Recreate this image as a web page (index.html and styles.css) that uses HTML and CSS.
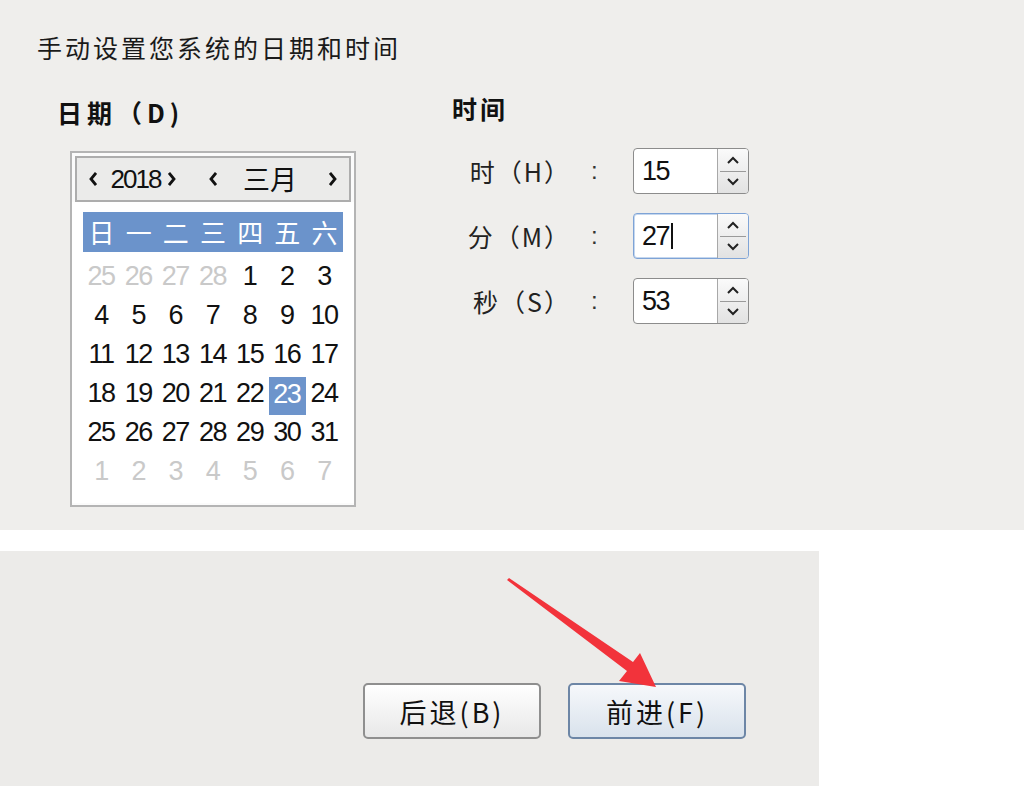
FILE: index.html
```html
<!DOCTYPE html>
<html lang="zh-CN">
<head>
<meta charset="utf-8">
<title>日期和时间</title>
<link rel="stylesheet" href="styles.css">
</head>
<body>
<div class="top">
  <div class="title">手动设置您系统的日期和时间</div>
  <div class="cols">
    <div class="date-col">
      <div class="heading">日期（D)</div>
      <div class="cal">
        <div class="cal-head">
          <svg class="chev c1" viewBox="0 0 8 16"><path d="M7 2 L2 8 L7 14" /></svg>
          <span class="year">2018</span>
          <svg class="chev c2" viewBox="0 0 8 16"><path d="M1 2 L6 8 L1 14" /></svg>
          <svg class="chev c3" viewBox="0 0 8 16"><path d="M7 2 L2 8 L7 14" /></svg>
          <span class="month">三月</span>
          <svg class="chev c4" viewBox="0 0 8 16"><path d="M1 2 L6 8 L1 14" /></svg>
        </div>
        <div class="cal-body">
          <div class="wk">
            <span>日</span><span>一</span><span>二</span><span>三</span><span>四</span><span>五</span><span>六</span>
          </div>
          <div class="days">
            <span class="off">25</span><span class="off">26</span><span class="off">27</span><span class="off">28</span><span>1</span><span>2</span><span>3</span>
            <span>4</span><span>5</span><span>6</span><span>7</span><span>8</span><span>9</span><span>10</span>
            <span>11</span><span>12</span><span>13</span><span>14</span><span>15</span><span>16</span><span>17</span>
            <span>18</span><span>19</span><span>20</span><span>21</span><span>22</span><span class="sel">23</span><span>24</span>
            <span>25</span><span>26</span><span>27</span><span>28</span><span>29</span><span>30</span><span>31</span>
            <span class="off">1</span><span class="off">2</span><span class="off">3</span><span class="off">4</span><span class="off">5</span><span class="off">6</span><span class="off">7</span>
          </div>
        </div>
      </div>
    </div>
    <div class="time-col">
      <div class="heading">时间</div>
      <div class="trow">
        <span class="tlabel">时（H）</span><span class="colon">:</span>
        <div class="spin">
          <div class="field">15</div>
          <div class="btns">
            <span class="sb up"><svg viewBox="0 0 12 8"><path d="M1 7 L6 2 L11 7" /></svg></span>
            <span class="sb down"><svg viewBox="0 0 12 8"><path d="M1 1 L6 6 L11 1" /></svg></span>
          </div>
        </div>
      </div>
      <div class="trow">
        <span class="tlabel">分（M）</span><span class="colon">:</span>
        <div class="spin focus">
          <div class="field">27<span class="caret"></span></div>
          <div class="btns">
            <span class="sb up"><svg viewBox="0 0 12 8"><path d="M1 7 L6 2 L11 7" /></svg></span>
            <span class="sb down"><svg viewBox="0 0 12 8"><path d="M1 1 L6 6 L11 1" /></svg></span>
          </div>
        </div>
      </div>
      <div class="trow">
        <span class="tlabel">秒（S）</span><span class="colon">:</span>
        <div class="spin">
          <div class="field">53</div>
          <div class="btns">
            <span class="sb up"><svg viewBox="0 0 12 8"><path d="M1 7 L6 2 L11 7" /></svg></span>
            <span class="sb down"><svg viewBox="0 0 12 8"><path d="M1 1 L6 6 L11 1" /></svg></span>
          </div>
        </div>
      </div>
    </div>
  </div>
</div>
<div class="bottom">
  <button class="btn">后退(B)</button>
  <button class="btn primary">前进(F)</button>
</div>
<svg class="arrow" width="1034" height="792" viewBox="0 0 1034 792">
  <polygon points="507,580 627,671 619,681 656,687 640,653 633,662 509,578" />
</svg>
</body>
</html>
```

FILE: styles.css
```css
html, body {
  margin: 0;
  padding: 0;
  background: #ffffff;
}
body {
  position: relative;
  width: 1034px;
  height: 792px;
  overflow: hidden;
  font-family: "Noto Sans CJK SC", "Liberation Sans", sans-serif;
  color: #111;
}
.top {
  width: 1024px;
  height: 530px;
  background: #efeeec;
  box-sizing: border-box;
  padding: 32px 0 0 37px;
}
.title {
  font-size: 25px;
  line-height: 30px;
  letter-spacing: 3px;
  color: #1a1a1a;
}
.cols {
  display: flex;
  margin-top: 36px;
}
.date-col {
  width: 395px;
  margin-left: 20px;
}
.heading {
  font-size: 25px;
  line-height: 28px;
  font-weight: bold;
  letter-spacing: 3px;
  color: #111;
}
.date-col .heading {
  letter-spacing: 5px;
}
.cal {
  margin: 25px 0 0 13px;
  width: 286px;
  height: 356px;
  box-sizing: border-box;
  border: 2px solid #b4b4b4;
  background: #fbfbfb;
  padding: 3px;
}
.cal-head {
  height: 46px;
  box-sizing: border-box;
  border: 2px solid #adadad;
  background: #ebebea;
  display: flex;
  align-items: center;
  font-family: "Liberation Sans", "Noto Sans CJK SC", sans-serif;
  font-size: 26px;
  color: #111;
}
.chev {
  width: 8px;
  height: 16px;
  fill: none;
  stroke: #111;
  stroke-width: 2.8;
  flex: none;
}
.c1 { margin-left: 12px; }
.year {
  margin-left: 11px;
  width: 55px;
  text-align: center;
  letter-spacing: -2px;
}
.c2 { margin-left: 5px; }
.c3 { margin-left: 33px; }
.month {
  margin-left: 26px;
  width: 54px;
  font-family: "Noto Sans CJK SC", sans-serif;
  font-size: 27px;
  line-height: 30px;
}
.c4 { margin-left: 32px; }
.cal-body {
  margin: 0 -3px;
  padding: 10px 11px 0 11px;
  background: #ffffff;
  height: 301px;
  box-sizing: border-box;
}
.wk {
  display: grid;
  grid-template-columns: repeat(7, 1fr);
  height: 40px;
  background: #6b93cb;
  color: #ffffff;
  font-size: 26px;
  line-height: 40px;
  text-align: center;
}
.days {
  display: grid;
  grid-template-columns: repeat(7, 1fr);
  grid-auto-rows: 39px;
  margin-top: 5px;
  font-family: "Liberation Sans", sans-serif;
  font-size: 27px;
  letter-spacing: -1.5px;
  text-align: center;
  color: #111;
}
.days span {
  line-height: 38px;
  padding-right: 1px;
}
.days .off {
  color: #c9c9c9;
}
.days .sel {
  background: #6d94cb;
  color: #ffffff;
  margin-top: 3px;
  line-height: 34px;
  height: 38px;
}
.time-col {
  margin-top: -4px;
}
.trow {
  display: flex;
  align-items: center;
  height: 46px;
  margin-top: 19px;
}
.time-col .heading + .trow {
  margin-top: 26px;
}
.tlabel {
  width: 119px;
  text-align: right;
  font-size: 25px;
  letter-spacing: 2px;
  color: #222;
}
.colon {
  width: 62px;
  padding-left: 20px;
  box-sizing: border-box;
  font-family: "Liberation Sans", sans-serif;
  font-size: 24px;
  color: #333;
}
.spin {
  width: 116px;
  height: 46px;
  box-sizing: border-box;
  border: 1px solid #8c8c8c;
  border-radius: 4px;
  background: #ffffff;
  display: flex;
  overflow: hidden;
}
.spin.focus {
  border-color: #7ea3d6;
  box-shadow: inset 0 0 0 1px #c5d7ee;
}
.field {
  flex: 1;
  display: flex;
  align-items: center;
  padding-left: 8px;
  font-family: "Liberation Sans", sans-serif;
  font-size: 27px;
  letter-spacing: -1.5px;
  color: #111;
}
.caret {
  display: inline-block;
  width: 2px;
  height: 26px;
  background: #111;
  margin-left: 2px;
}
.btns {
  width: 30px;
  border-left: 1px solid #a8a8a8;
  background: linear-gradient(#fafafa, #e2e2e2);
  display: flex;
  flex-direction: column;
}
.sb {
  flex: 1;
  display: flex;
  justify-content: center;
  align-items: center;
}
.sb.down {
  border-top: 1px solid #9a9a9a;
  margin: 0 2px;
}
.sb svg {
  width: 12px;
  height: 8px;
  fill: none;
  stroke: #222;
  stroke-width: 2;
}
.bottom {
  margin-top: 21px;
  width: 819px;
  height: 235px;
  background: #ecebe9;
  display: flex;
  justify-content: flex-end;
  align-items: flex-end;
  gap: 27px;
  padding: 0 73px 47px 0;
  box-sizing: border-box;
}
.btn {
  width: 178px;
  height: 56px;
  border: 2px solid #8f8f8f;
  border-radius: 5px;
  background: linear-gradient(#ffffff, #e8e8e8);
  font-family: "Noto Sans CJK SC", sans-serif;
  font-size: 27px;
  color: #111;
  padding: 0;
  letter-spacing: 3px;
}
.btn.primary {
  border-color: #6d86a6;
  background: linear-gradient(#f6f8fb, #d9e2ec);
}
.arrow {
  position: absolute;
  left: 0;
  top: 0;
  pointer-events: none;
}
.arrow polygon {
  fill: #f2333b;
}
```
